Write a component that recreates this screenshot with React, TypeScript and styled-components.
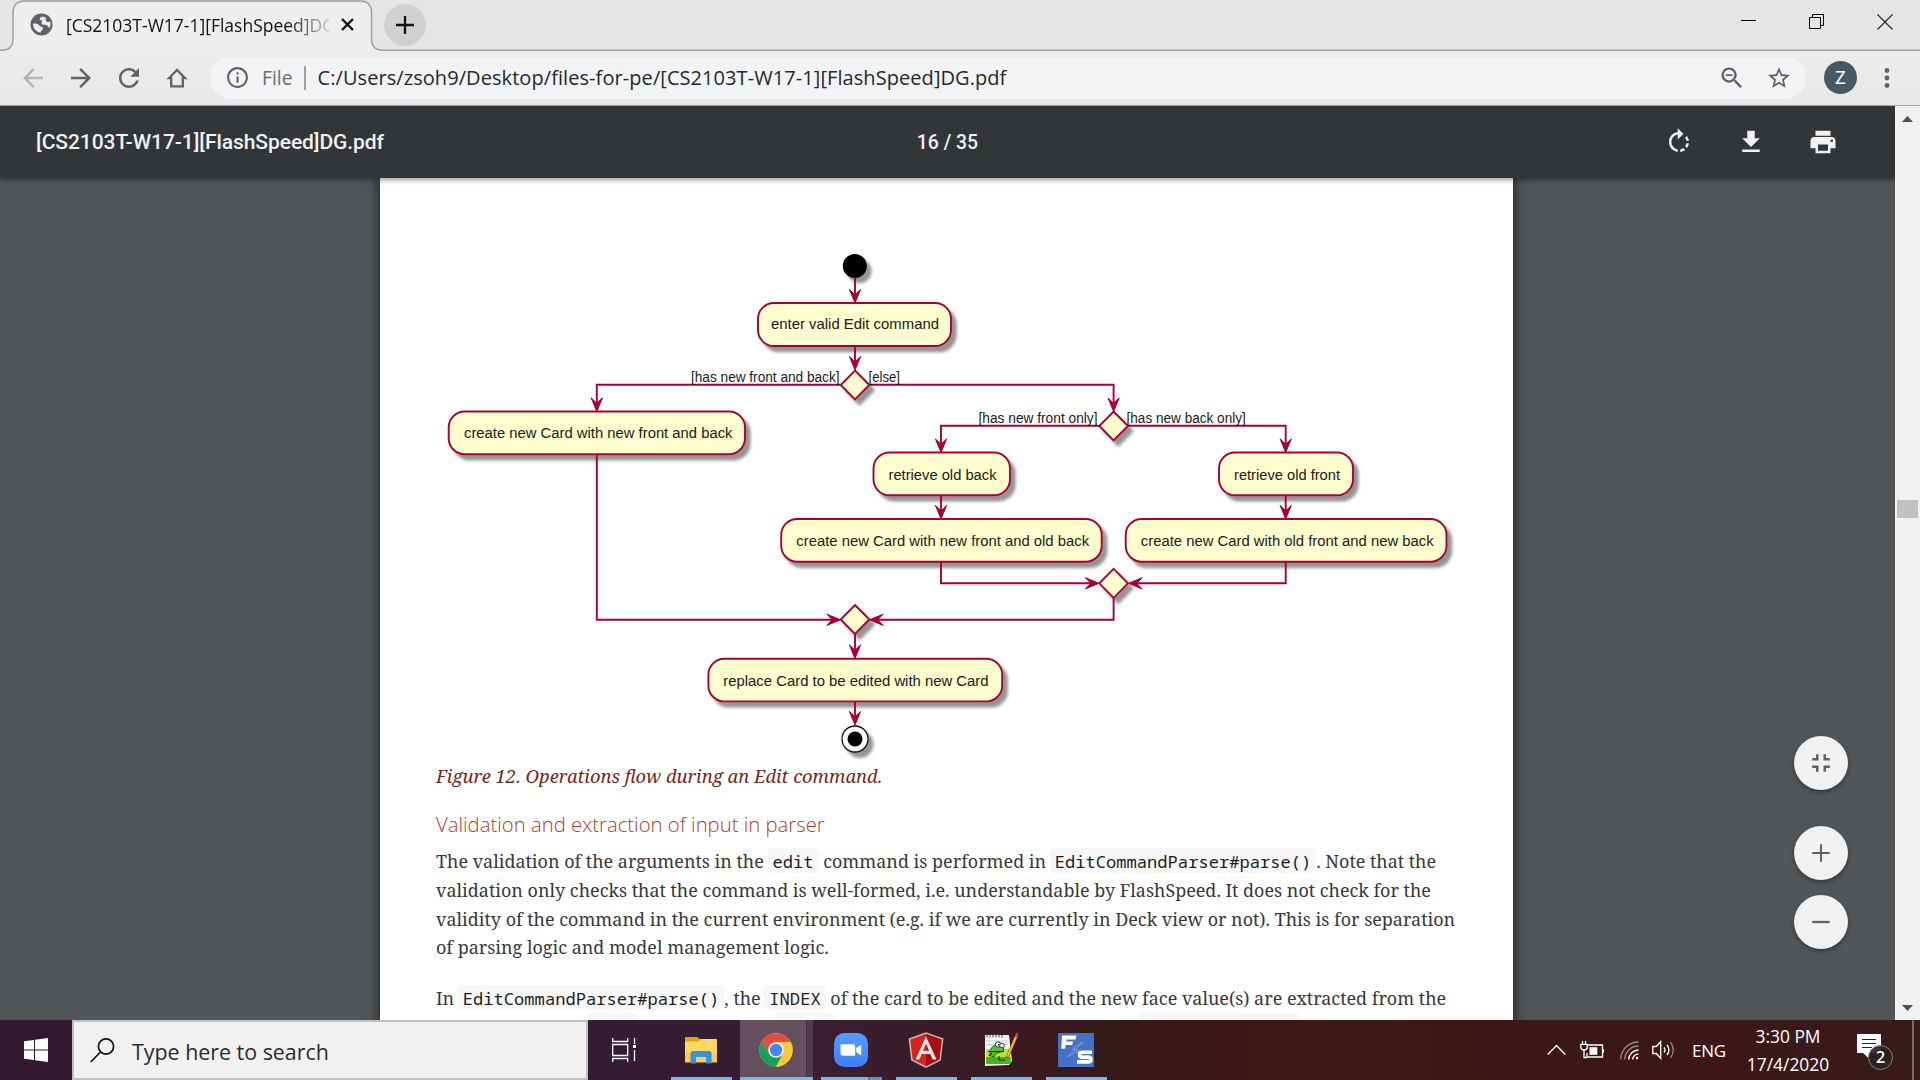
import React from "react";
import styled, { createGlobalStyle } from "styled-components";

const ui = `"Open Sans", "Noto Sans", sans-serif`;
const serif = `"Noto Serif", "DejaVu Serif Condensed", "DejaVu Serif", serif`;
const mono = `"Noto Sans Mono", "DejaVu Sans Mono", monospace`;
const crimson = "#a80036";

const GlobalStyle = createGlobalStyle`
  *, *::before, *::after { box-sizing: border-box; }
  body { margin: 0; overflow: hidden; }
  svg { display: block; flex: none; }
`;

const Screen = styled.div`
  width: 1920px;
  height: 1080px;
  display: flex;
  flex-direction: column;
  overflow: hidden;
  font-family: ${ui};
`;

/* ---------- browser chrome ---------- */

const TabStrip = styled.div`
  position: relative;
  height: 51px;
  flex: none;
  display: flex;
  background: #e5e5e5;
`;

const TabOutline = styled.svg`
  position: absolute;
  left: 0;
  top: 0;
`;

const Tab = styled.div`
  position: relative;
  width: 372px;
  padding: 0 17px 2px 30px;
  display: flex;
  align-items: center;
`;

const TabTitle = styled.div`
  flex: none;
  width: 263px;
  margin: 0 12px 0 13px;
  overflow: hidden;
  white-space: nowrap;
  font-size: 17.5px;
  color: #111;
  mask-image: linear-gradient(to right, #000 84%, transparent 103%);
`;

const NewTab = styled.div`
  position: relative;
  width: 42px;
  height: 42px;
  margin: 4px 0 0 12px;
  border-radius: 50%;
  background: #d0d0d0;
  display: grid;
  place-items: center;
`;

const WindowButtons = styled.div`
  position: relative;
  margin-left: auto;
  height: 43px;
  padding-right: 27px;
  display: flex;
  align-items: center;
  gap: 52px;
`;

const AddressRow = styled.div`
  height: 55px;
  flex: none;
  padding: 0 23px 1px 18px;
  display: flex;
  align-items: center;
  gap: 18px;
  background: linear-gradient(#ececec, #e8e8e8);
  border-bottom: 1px solid #a5a5a5;
`;

const AddressBar = styled.div`
  flex: none;
  width: 1596px;
  height: 42px;
  padding: 0 14px 0 15px;
  border-radius: 21px;
  background: #f1f3f4;
  display: flex;
  align-items: center;
`;

const Scheme = styled.span`
  margin-left: 12px;
  padding-right: 11px;
  font-size: 19.3px;
  line-height: 24px;
  color: #6b6e72;
  border-right: 2px solid #9da0a4;
`;

const Url = styled.span`
  margin-left: 12px;
  padding-top: 1px;
  flex: 1;
  font-size: 20px;
  line-height: 24px;
  letter-spacing: 0.07px;
  color: #25282c;
`;

const StarSlot = styled.span`
  margin-left: 20px;
`;

const Avatar = styled.div`
  width: 33px;
  height: 33px;
  border-radius: 50%;
  background: #455a64;
  color: #fff;
  font: 18px Roboto, sans-serif;
  display: grid;
  place-items: center;
`;

const MenuSlot = styled.div`
  margin-left: auto;
  width: 20px;
  display: grid;
  place-items: center;
`;

/* ---------- pdf viewer ---------- */

const Viewer = styled.div`
  height: 914px;
  flex: none;
  display: flex;
  background: #525659;
`;

const ViewerMain = styled.div`
  position: relative;
  width: 1895px;
  height: 914px;
  overflow: hidden;
  display: flex;
  flex-direction: column;
`;

const PdfBar = styled.div`
  position: relative;
  z-index: 1;
  height: 72px;
  flex: none;
  padding: 0 57px 0 36px;
  display: grid;
  grid-template-columns: 1fr auto 1fr;
  align-items: center;
  background: #323639;
  color: #f1f1f1;
  font-family: Roboto, sans-serif;
  font-weight: 500;
  box-shadow: 0 2px 5px rgba(0, 0, 0, 0.4);
`;

const PdfTitle = styled.div`
  font-size: 21px;
  letter-spacing: -0.07px;
`;

const PageCount = styled.div`
  font-size: 19.4px;
  padding-left: 21px;
`;

const PdfActions = styled.div`
  display: flex;
  justify-content: flex-end;
  gap: 42px;
`;

const Page = styled.div`
  width: 1133px;
  flex: none;
  margin-left: 380px;
  height: 1000px;
  background: #fff;
  box-shadow: 0 0 10px 2px rgba(0, 0, 0, 0.55);
`;

const Prose = styled.div`
  padding-left: 56px;
  font-family: ${serif};
  font-size: 17.95px;
  color: #36383a;
  white-space: nowrap;
`;

const Caption = styled.div`
  line-height: 28px;
  font-style: italic;
  font-size: 18.35px;
  color: #7a2518;
`;

const Heading = styled.div`
  margin: 20px 0 9px;
  line-height: 28px;
  font-family: "Open Sans", sans-serif;
  font-weight: 300;
  font-size: 20.3px;
  color: #ba3925;
`;

const Paragraph = styled.div`
  margin-bottom: 22px;
`;

const Line = styled.div`
  height: 28.8px;
  line-height: 28.8px;
`;

const Code = styled.code`
  margin-left: -1px;
  padding: 2px 5px 0;
  border-radius: 4px;
  background: #f7f7f8;
  color: #1c1c1e;
  font-family: ${mono};
  font-size: 17.1px;
  line-height: 1;
`;

const ChipRow = styled.div`
  display: flex;
  padding-left: 151px;
`;

const EmptyChip = styled.span<{ $width: number; $after: number }>`
  width: ${(p) => p.$width}px;
  height: 25px;
  margin-right: ${(p) => p.$after}px;
  border-radius: 4px;
  background: #f7f7f8;
`;

const ZoomControls = styled.div`
  position: absolute;
  left: 1794px;
  top: 630px;
  display: flex;
  flex-direction: column;
`;

const RoundButton = styled.div<{ $gap: number }>`
  width: 54px;
  height: 54px;
  margin-bottom: ${(p) => p.$gap}px;
  border-radius: 50%;
  background: #f1f1f1;
  display: grid;
  place-items: center;
  box-shadow: 0 2px 4px rgba(0, 0, 0, 0.4);
`;

const Scrollbar = styled.div`
  width: 25px;
  padding: 10px 0 9px;
  background: #f1f1f1;
  display: flex;
  flex-direction: column;
  align-items: center;
`;

const Thumb = styled.div`
  width: 21px;
  height: 18px;
  margin: 378px 0 auto;
  background: #c1c1c1;
`;

/* ---------- taskbar ---------- */

const Taskbar = styled.div`
  height: 60px;
  flex: none;
  display: flex;
  color: #fff;
  background: linear-gradient(to right, #33192f 0, #351c35 620px, #391e30 830px, #3a1a22 1010px, #36191a 1110px, #3e1816 1300px, #3c1718 1700px, #371b1a 1920px);
`;

const StartButton = styled.div`
  width: 72px;
  display: grid;
  place-items: center;
`;

const SearchBox = styled.div`
  width: 516px;
  border: 2px solid #c1c1c1;
  background: #f1f1f1;
  padding: 0 0 0 16px;
  display: flex;
  align-items: center;
  gap: 17px;
  color: #2b2b2b;
  font-size: 21.4px;
`;

const SearchHint = styled.span`
  padding-top: 2px;
`;

const TaskViewButton = styled.div`
  width: 76px;
  padding-right: 4px;
  display: grid;
  place-items: center;
`;

const AppTile = styled.div<{ $active?: boolean }>`
  width: 75px;
  padding-top: 3px;
  display: flex;
  flex-direction: column;
  align-items: center;
  justify-content: space-between;
  background: ${(p) =>
    p.$active ? "linear-gradient(to right, transparent 1px, #64505f 1px, #64505f 67px, #44303f 67px, #44303f 68px, #513d4c 68px, #513d4c 74px, transparent 74px)" : "none"};
`;

const TileIcon = styled.div`
  flex: 1;
  padding-right: 2px;
  display: grid;
  place-items: center;
`;

const Underline = styled.div<{ $wide?: boolean; $stacked?: boolean }>`
  width: ${(p) => (p.$wide ? 73 : 61)}px;
  height: 3px;
  background: ${(p) =>
    p.$stacked ? "linear-gradient(to right, #76b9ed 47px, #517b9c 47px, #517b9c 49px, #6496bd 49px)" : "#76b9ed"};
`;

const Tray = styled.div`
  margin-left: auto;
  display: flex;
  align-items: center;
`;

const TraySlot = styled.div<{ $left: number }>`
  margin-left: ${(p) => p.$left}px;
`;

const Language = styled.div`
  width: 36px;
  margin-left: 17px;
  font-size: 17px;
  letter-spacing: -0.3px;
`;

const Clock = styled.div`
  width: 84px;
  margin-left: 18px;
  text-align: center;
  font-size: 17.4px;
  line-height: 28px;
`;

const Notifications = styled.div`
  position: relative;
  width: 36px;
  height: 38px;
  margin: 6px 0 0 27px;
`;

const Badge = styled.div`
  position: absolute;
  left: 11px;
  top: 11px;
  width: 25px;
  height: 25px;
  border-radius: 50%;
  border: 1.5px solid #8b8080;
  background: rgba(42, 34, 34, 0.93);
  font-size: 16px;
  font-weight: 600;
  line-height: 22px;
  text-align: center;
`;

const ShowDesktop = styled.div`
  width: 8px;
  height: 60px;
  margin-left: 19px;
  border-left: 2px solid #7d6767;
`;

/* ---------- icons ---------- */

const Icon = ({ d, size, fill }: { d: string; size: number; fill: string }) => (
  <svg width={size} height={size} viewBox="0 0 24 24" fill={fill}>
    <path d={d} />
  </svg>
);

const paths = {
  back: "M20 11H7.83l5.59-5.59L12 4l-8 8 8 8 1.41-1.41L7.83 13H20v-2z",
  forward: "M12 4l-1.41 1.41L16.17 11H4v2h12.17l-5.58 5.59L12 20l8-8z",
  reload:
    "M17.65 6.35C16.2 4.9 14.21 4 12 4c-4.42 0-7.99 3.58-7.99 8s3.57 8 7.99 8c3.73 0 6.84-2.55 7.73-6h-2.08c-.82 2.33-3.04 4-5.65 4-3.31 0-6-2.69-6-6s2.69-6 6-6c1.66 0 3.14.69 4.22 1.78L13 11h7V4l-2.35 2.35z",
  info: "M11 17h2v-6h-2v6zm1-15C6.48 2 2 6.48 2 12s4.48 10 10 10 10-4.48 10-10S17.52 2 12 2zm0 18c-4.41 0-8-3.59-8-8s3.59-8 8-8 8 3.59 8 8-3.59 8-8 8zM11 9h2V7h-2v2z",
  zoomOut:
    "M15.5 14h-.79l-.28-.27C15.41 12.59 16 11.11 16 9.5 16 5.91 13.09 3 9.5 3S3 5.91 3 9.5 5.91 16 9.5 16c1.61 0 3.09-.59 4.23-1.57l.27.28v.79l5 4.99L20.49 19l-4.99-5zm-6 0C7.01 14 5 11.99 5 9.5S7.01 5 9.5 5 14 7.01 14 9.5 11.99 14 9.5 14zM6.6 8.8h5.8v1.4H6.6z",
  star: "M22 9.24l-7.19-.62L12 2 9.19 8.63 2 9.24l5.46 4.73L5.82 21 12 17.27 18.18 21l-1.63-7.03L22 9.24zM12 15.4l-3.76 2.27 1-4.28-3.32-2.88 4.38-.38L12 6.1l1.71 4.04 4.38.38-3.32 2.88 1 4.28L12 15.4z",
  rotate:
    "M15.55 5.55L11 1v3.07C7.06 4.56 4 7.92 4 12s3.05 7.44 7 7.93v-2.02c-2.84-.48-5-2.94-5-5.91s2.16-5.43 5-5.91V10l4.55-4.45zM19.93 11c-.17-1.39-.72-2.73-1.62-3.89l-1.42 1.42c.54.75.88 1.6 1.02 2.47h2.02zM13 17.9v2.02c1.39-.17 2.74-.71 3.9-1.61l-1.44-1.44c-.75.54-1.59.89-2.46 1.03zm3.89-2.42l1.42 1.41c.9-1.16 1.45-2.5 1.62-3.89h-2.02c-.14.87-.48 1.72-1.02 2.48z",
  download: "M19 9h-4V3H9v6H5l7 7 7-7zM5 18v2h14v-2H5z",
  print:
    "M19 8H5c-1.66 0-3 1.34-3 3v6h4v4h12v-4h4v-6c0-1.66-1.34-3-3-3zm-3 11H8v-5h8v5zm3-7c-.55 0-1-.45-1-1s.45-1 1-1 1 .45 1 1-.45 1-1 1zm-1-9H6v4h12V3z",
  fit: "M5 16h3v3h2v-5H5v2zm3-8H5v2h5V5H8v3zm6 11h2v-3h3v-2h-5v5zm2-11V5h-2v5h5V8h-3z",
  plus: "M19 12.8h-6.2V19h-1.6v-6.2H5v-1.6h6.2V5h1.6v6.2H19z",
  minus: "M5 11.1h14v1.8H5z",
};

const Globe = () => (
  <svg width="23" height="23" viewBox="0 0 23 23">
    <circle cx="11.5" cy="11.5" r="11" fill="#5f6368" />
    <path d="M13 3.4c-2.6.5-3.7 1.5-3.2 3.2l2.7 1.1-1.2 2.2 1 1.6 4.4.5 2.6 3c1.2-1.9 1.6-4.3.9-6.4l-2.7.6-2.3-2.4 1.1-1.9z" fill="#efefef" />
    <path d="M3 10.5c2.6.1 5 .1 6.1 1.7 1.3 1.9 3.4.9 3.8 2.8.3 1.8-1.8 2-2.1 4.6-4.6-.3-7.8-4.3-7.8-9.1z" fill="#efefef" />
  </svg>
);

const HomeIcon = () => (
  <svg width="30" height="30" viewBox="-15 -15 30 30">
    <path d="M-8 .2L0-8 8 .2H5.8V8.3H-5.8V.2Z" fill="none" stroke="#5f6368" strokeWidth="2.3" />
  </svg>
);

const ExplorerIcon = () => (
  <svg width="34" height="28" viewBox="0 0 34 28">
    <path d="M1 1h12l3 2h0v5H1z" fill="#e0a010" />
    <path d="M1 5.5h13l2.500-2.5H32a1 1 0 0 1 1 1v22H1z" fill="#ffd766" />
    <path d="M1 17h32v9.5H1z" fill="#fbcb4f" />
    <path d="M6.5 27.5V17.5a2.5 2.5 0 0 1 2.5-2.5h16a2.5 2.5 0 0 1 2.5 2.5v10h-5.5v-6.5H12v6.5z" fill="#3592dc" />
  </svg>
);

const ChromeIcon = () => (
  <svg width="34" height="34" viewBox="-17 -17 34 34">
    <circle r="16.7" fill="#fdc83c" />
    <path d="M-14.5-8.3A16.7 16.7 0 0 1 14.5-8H0L-7 4z" fill="#dd4f43" />
    <path d="M-14.5-8.3A16.7 16.7 0 0 0 0 16.7L7 4H-7z" fill="#179f5c" />
    <path d="M14.6-8A16.7 16.7 0 0 1 0 16.7L6.9 4 2-8z" fill="#fdc83c" />
    <circle r="7.8" fill="#f4f4f4" />
    <circle r="6.2" fill="#4688f1" />
  </svg>
);

const ZoomIcon = () => (
  <svg width="34" height="34" viewBox="0 0 34 34">
    <defs>
      <linearGradient id="zoomBlue" x2="0" y2="1">
        <stop offset="0" stopColor="#559dff" />
        <stop offset="1" stopColor="#3c80f8" />
      </linearGradient>
    </defs>
    <rect width="34" height="34" rx="10.5" fill="url(#zoomBlue)" />
    <path d="M6.5 11.2h12.3a2.4 2.4 0 0 1 2.4 2.4v9.2H9a2.5 2.5 0 0 1-2.5-2.5z" fill="#fff" />
    <path d="M22.2 15.1l5-3.4v10.8l-5-3.4z" fill="#fff" />
  </svg>
);

const AngularIcon = () => (
  <svg width="38" height="38" viewBox="0 0 38 38">
    <path d="M19 1.2L36.500 7.4 33.8 29.5 19 37 4.2 29.5 1.5 7.4z" fill="#b9b9b9" />
    <path d="M19 2.9L34.7 8.5 32.3 28.4 19 35.2 5.7 28.4 3.3 8.5z" fill="#df1f1a" />
    <path d="M19 2.9L34.7 8.5 32.3 28.4 19 35.2z" fill="#a90f12" />
    <path d="M19 5.5L8.5 28.5h3.9l2.3-5.6h8.6l2.3 5.6h3.9zm0 6.9l3.1 7.3h-6.2z" fill="#ececec" />
  </svg>
);

const NotepadIcon = () => (
  <svg width="36" height="36" viewBox="0 0 36 36">
    <path d="M2 3h24l3 26-3 4L2 34z" fill="#f4f6f4" />
    <path d="M3 9h22M3 12.5h22" stroke="#b9cdd8" strokeWidth="1" />
    <path d="M3 17h23l2 13-2 2H3z" fill="#b8e236" />
    <path d="M3 25h24.5l.5 5-2 2H3z" fill="#46b51e" />
    <path d="M4 2v3.500M7 2v3.500M10 2v3.500M13 2v3.500M16 2v3.500M19 2v3.500" stroke="#555" strokeWidth="1.1" />
    <path d="M8 17c1-4 8-5 12-2l1 3c-3 2-4 3-8 3l-2 4-3-1c-2-2-1-5 0-7z" fill="#58c22b" stroke="#2b5d1d" strokeWidth="1" />
    <circle cx="15" cy="12.5" r="2.7" fill="#fff" stroke="#333" strokeWidth="1" />
    <circle cx="19" cy="13.5" r="2.3" fill="#fff" stroke="#333" strokeWidth="1" />
    <circle cx="15.6" cy="12.7" r=".8" />
    <path d="M5 19.5h16M16 24v4h6M9 21l-3 3" stroke="#25341c" strokeWidth="1.2" fill="none" />
    <path d="M33.5 3.5L24 26" stroke="#7a4c10" strokeWidth="3.2" />
    <path d="M33.2 4.5L24.4 25" stroke="#f3b52a" strokeWidth="2.1" />
    <path d="M34.5 1L33 5" stroke="#b64a4a" strokeWidth="2.4" />
  </svg>
);

const FlashSpeedIcon = () => (
  <svg width="36" height="34" viewBox="0 0 36 34">
    <rect width="36" height="34" fill="#4472c4" />
    <path d="M9 24l8-7-1-3 9-5-7 7 1 3zM14 16l8 2" stroke="#86a5da" strokeWidth=".8" fill="none" />
    <path d="M4 2.500H18.500L17.500 6.500H8.500L8.200 8.500H15L14.200 12H7.800L7 15.800H3.300z" fill="#fff" />
    <path d="M34 19.300H24.500q-3 0-3 2.400t3 2.400h5.500q3 0 3 2.400t-3 2.400H19" stroke="#fff" strokeWidth="3.600" fill="none" />
  </svg>
);

/* ---------- activity diagram ---------- */

const Diagram = styled.svg`
  font-family: "Liberation Sans", Arial, sans-serif;
`;

type BoxProps = { x: number; y: number; w: number; h: number; tx: number; tw: number; base: number; label: string };

const boxes: BoxProps[] = [
  { x: 758, y: 303, w: 193, h: 43, tx: 771, tw: 168, base: 329.2, label: "enter valid Edit command" },
  { x: 448.7, y: 411.5, w: 296.3, h: 42.7, tx: 464, tw: 268.5, base: 438.3, label: "create new Card with new front and back" },
  { x: 873.5, y: 452.5, w: 136.5, h: 42.8, tx: 888.5, tw: 108, base: 479.5, label: "retrieve old back" },
  { x: 1219, y: 452.5, w: 134, h: 42.8, tx: 1234, tw: 106, base: 479.5, label: "retrieve old front" },
  { x: 781.2, y: 519, w: 320.5, h: 42.7, tx: 796.3, tw: 292.8, base: 546.2, label: "create new Card with new front and old back" },
  { x: 1125.7, y: 519, w: 320.8, h: 42.7, tx: 1140.8, tw: 292.8, base: 546.2, label: "create new Card with old front and new back" },
  { x: 708.4, y: 658.7, w: 293.8, h: 42.7, tx: 723.3, tw: 265.3, base: 685.8, label: "replace Card to be edited with new Card" },
];

const ActionBox = ({ x, y, w, h, tx, tw, base, label }: BoxProps) => (
  <g>
    <rect x={x} y={y} width={w} height={h} rx="16" fill="#fefece" stroke={crimson} strokeWidth="1.9" filter="url(#drop)" />
    <text x={tx} y={base} fontSize="15.3" textLength={tw} lengthAdjust="spacingAndGlyphs" fill="#1a1a18">
      {label}
    </text>
  </g>
);

const Diamond = ({ x, y }: { x: number; y: number }) => (
  <path d={`M${x} ${y - 14.5}l14.3 14.5-14.3 14.5-14.3-14.5z`} fill="#fefece" stroke={crimson} strokeWidth="1.9" filter="url(#drop)" />
);

const Arrow = ({ x, y, turn = 0 }: { x: number; y: number; turn?: number }) => (
  <path d="M0 0L-5.6-13.6 0-8.2 5.6-13.6Z" transform={`translate(${x} ${y}) rotate(${turn})`} fill={crimson} stroke={crimson} strokeWidth="1" />
);

const guards = [
  { x: 691, y: 381.5, w: 148.5, label: "[has new front and back]" },
  { x: 868.5, y: 381.5, w: 31.5, label: "[else]" },
  { x: 978.5, y: 423, w: 119, label: "[has new front only]" },
  { x: 1126.5, y: 423, w: 119.3, label: "[has new back only]" },
];

const ActivityDiagram = () => (
  <Diagram width="1133" height="584" viewBox="380 178 1133 584">
    <defs>
      <filter id="drop" x="-20%" y="-30%" width="150%" height="180%">
        <feDropShadow dx="4.7" dy="5.2" stdDeviation="1.8" floodColor="#000" floodOpacity=".42" />
      </filter>
    </defs>
    <circle cx="854.8" cy="266" r="12" filter="url(#drop)" />
    {boxes.map((b) => (
      <ActionBox key={b.label} {...b} />
    ))}
    <Diamond x={855} y={385} />
    <Diamond x={1113.6} y={426} />
    <Diamond x={1113.6} y={583.3} />
    <Diamond x={855} y={619.5} />
    <g fill="none" stroke={crimson} strokeWidth="1.9">
      <path d="M855 278V298M855 347V366M840.5 384.700H596.8V405M869.5 384.700H1113.6V405" />
      <path d="M1099 425.800H941V446M1128 425.800H1285.7V446M941 496V512M1285.7 496V512" />
      <path d="M941 562V583.3H1092M1285.7 562V583.3H1136M1113.6 598V619.8H877M596.8 455V619.8H834" />
      <path d="M855 634V652M855 702V718" />
    </g>
    <Arrow x={855} y={303} />
    <Arrow x={855} y={370} />
    <Arrow x={596.8} y={411.5} />
    <Arrow x={1113.6} y={411.5} />
    <Arrow x={941} y={452.5} />
    <Arrow x={1285.7} y={452.5} />
    <Arrow x={941} y={519} />
    <Arrow x={1285.7} y={519} />
    <Arrow x={855} y={658.5} />
    <Arrow x={855} y={725} />
    <Arrow x={1099} y={583.3} turn={-90} />
    <Arrow x={1128.5} y={583.3} turn={90} />
    <Arrow x={840.5} y={619.8} turn={-90} />
    <Arrow x={869.5} y={619.8} turn={90} />
    <circle cx="855" cy="739" r="13" fill="#fff" stroke="#111" strokeWidth="1.3" filter="url(#drop)" />
    <circle cx="855" cy="739" r="7.5" />
    {guards.map((g) => (
      <text key={g.label} x={g.x} y={g.y} fontSize="14" textLength={g.w} lengthAdjust="spacingAndGlyphs" fill="#1a1a18">
        {g.label}
      </text>
    ))}
  </Diagram>
);

/* ---------- page ---------- */

export default function App() {
  return (
    <Screen>
      <GlobalStyle />
      <TabStrip>
        <TabOutline width="1920" height="51" viewBox="0 0 1920 51">
          <path
            d="M-2 50.3H2Q13 50.3 13 39V13Q13 1 25 1H360Q371.5 1 371.5 13V39Q371.5 50.3 384 50.3H1922V53H-2Z"
            fill="#eeeeee"
            stroke="#a0a0a0"
            strokeWidth="1.5"
          />
        </TabOutline>
        <Tab>
          <Globe />
          <TabTitle>[CS2103T-W17-1][FlashSpeed]DG.pdf</TabTitle>
          <svg width="13" height="13" viewBox="0 0 13 13">
            <path d="M1 1l11 11M12 1L1 12" stroke="#111" strokeWidth="2.4" />
          </svg>
        </Tab>
        <NewTab>
          <svg width="18" height="18" viewBox="0 0 18 18">
            <path d="M9 0v18M0 9h18" stroke="#111" strokeWidth="2.3" />
          </svg>
        </NewTab>
        <WindowButtons>
          <svg width="16" height="16" viewBox="0 0 16 16">
            <path d="M0 6.5h15" stroke="#000" />
          </svg>
          <svg width="16" height="16" viewBox="0 0 16 16" fill="none" stroke="#000">
            <path d="M.5 3.500h11v11H.5zM3.500 3V.5h11v11H12" />
          </svg>
          <svg width="16" height="16" viewBox="0 0 16 16">
            <path d="M.5.5l15 15M15.5.5l-15 15" stroke="#222" strokeWidth="1.1" />
          </svg>
        </WindowButtons>
      </TabStrip>

      <AddressRow>
        <Icon d={paths.back} size={30} fill="#b4b5b7" />
        <Icon d={paths.forward} size={30} fill="#5f6368" />
        <Icon d={paths.reload} size={30} fill="#5f6368" />
        <HomeIcon />
        <AddressBar>
          <Icon d={paths.info} size={25} fill="#5f6368" />
          <Scheme>File</Scheme>
          <Url>C:/Users/zsoh9/Desktop/files-for-pe/[CS2103T-W17-1][FlashSpeed]DG.pdf</Url>
          <Icon d={paths.zoomOut} size={28} fill="#5f6368" />
          <StarSlot>
            <Icon d={paths.star} size={26} fill="#5f6368" />
          </StarSlot>
        </AddressBar>
        <Avatar>Z</Avatar>
        <MenuSlot>
          <svg width="6" height="22" viewBox="0 0 6 22" fill="#5f6368">
            <circle cx="3" cy="3.5" r="2.4" />
            <circle cx="3" cy="11" r="2.4" />
            <circle cx="3" cy="18.5" r="2.4" />
          </svg>
        </MenuSlot>
      </AddressRow>

      <Viewer>
        <ViewerMain>
          <PdfBar>
            <PdfTitle>[CS2103T-W17-1][FlashSpeed]DG.pdf</PdfTitle>
            <PageCount>16 / 35</PageCount>
            <PdfActions>
              <Icon d={paths.rotate} size={30} fill="#f1f1f1" />
              <Icon d={paths.download} size={30} fill="#f1f1f1" />
              <Icon d={paths.print} size={30} fill="#f1f1f1" />
            </PdfActions>
          </PdfBar>
          <Page>
            <ActivityDiagram />
            <Prose>
              <Caption>Figure 12. Operations flow during an Edit command.</Caption>
              <Heading>Validation and extraction of input in parser</Heading>
              <Paragraph>
                <Line>
                  The validation of the arguments in the <Code>edit</Code> command is performed in{" "}
                  <Code>EditCommandParser#parse()</Code>. Note that the
                </Line>
                <Line>
                  validation only checks that the command is well-formed, i.e. understandable by FlashSpeed. It does not
                  check for the
                </Line>
                <Line>
                  validity of the command in the current environment (e.g. if we are currently in Deck view or not).
                  This is for separation
                </Line>
                <Line>of parsing logic and model management logic.</Line>
              </Paragraph>
              <Line>
                In <Code>EditCommandParser#parse()</Code>, the <Code>INDEX</Code> of the card to be edited and the new
                face value(s) are extracted from the
              </Line>
              <ChipRow>
                <EmptyChip $width={50} $after={138} />
                <EmptyChip $width={59} $after={304} />
                <EmptyChip $width={162} $after={0} />
              </ChipRow>
            </Prose>
          </Page>
          <ZoomControls>
            <RoundButton $gap={36}>
              <Icon d={paths.fit} size={30} fill="#616161" />
            </RoundButton>
            <RoundButton $gap={15}>
              <Icon d={paths.plus} size={30} fill="#616161" />
            </RoundButton>
            <RoundButton $gap={0}>
              <Icon d={paths.minus} size={30} fill="#616161" />
            </RoundButton>
          </ZoomControls>
        </ViewerMain>
        <Scrollbar>
          <svg width="11" height="6" viewBox="0 0 11 6">
            <path d="M0 6L5.5 0 11 6z" fill="#505050" />
          </svg>
          <Thumb />
          <svg width="11" height="6" viewBox="0 0 11 6">
            <path d="M0 0L5.5 6 11 0z" fill="#505050" />
          </svg>
        </Scrollbar>
      </Viewer>

      <Taskbar>
        <StartButton>
          <svg width="24" height="24" viewBox="0 0 24 24" fill="#fff">
            <path d="M0 3.3L10 1.9V11.4H0zM11 1.7L24 0V11.4H11zM0 12.4H10V22L0 20.700zM11 12.4H24V24L11 22.2z" />
          </svg>
        </StartButton>
        <SearchBox>
          <svg width="25" height="25" viewBox="0 0 25 25" fill="none" stroke="#111" strokeWidth="1.7">
            <circle cx="16" cy="8.5" r="7.6" />
            <path d="M10.5 14L.8 24" />
          </svg>
          <SearchHint>Type here to search</SearchHint>
        </SearchBox>
        <TaskViewButton>
          <svg width="25" height="24" viewBox="0 0 25 24" fill="none" stroke="#fff" strokeWidth="1.3">
            <path d="M.7 0v3.500h15V0M.7 6.500h15v11H.7zM.7 24v-3.500h15V24M22.500 0v6M22.500 12v11" />
            <path d="M21 7h3v3h-3z" fill="#fff" stroke="none" />
          </svg>
        </TaskViewButton>
        <AppTile>
          <TileIcon>
            <ExplorerIcon />
          </TileIcon>
          <Underline />
        </AppTile>
        <AppTile $active>
          <TileIcon>
            <ChromeIcon />
          </TileIcon>
          <Underline $wide />
        </AppTile>
        <AppTile>
          <TileIcon>
            <ZoomIcon />
          </TileIcon>
          <Underline $stacked />
        </AppTile>
        <AppTile>
          <TileIcon>
            <AngularIcon />
          </TileIcon>
          <Underline />
        </AppTile>
        <AppTile>
          <TileIcon>
            <NotepadIcon />
          </TileIcon>
          <Underline />
        </AppTile>
        <AppTile>
          <TileIcon>
            <FlashSpeedIcon />
          </TileIcon>
          <Underline />
        </AppTile>

        <Tray>
          <TraySlot $left={0}>
            <svg width="19" height="12" viewBox="0 0 19 12" fill="none" stroke="#fff" strokeWidth="1.4">
              <path d="M.7 10.5L9.5 1.500l8.800 9" />
            </svg>
          </TraySlot>
          <TraySlot $left={14}>
            <svg width="25" height="18" viewBox="0 0 25 18" fill="none" stroke="#fff" strokeWidth="1.3">
              <path d="M8 4h14.500v12H7V12M23.300 8v4M2.500 0v3M5.500 0v3M.8 3.300h6.500V6q0 3-3.200 3T.8 6zM4 9v7.500h3" />
              <path d="M9.5 6.200h7.800v7.600H9.500z" fill="#fff" stroke="none" />
            </svg>
          </TraySlot>
          <TraySlot $left={15}>
            <svg width="19" height="19" viewBox="0 0 19 19" fill="none" stroke="#fff" strokeWidth="1.4">
              <path d="M.7 18.500A17.800 17.800 0 0 1 18.500 1M4.700 18.500A13.800 13.800 0 0 1 18.500 5" stroke="#9b8787" />
              <path d="M8.700 18.500A9.800 9.800 0 0 1 18.500 9M12.700 18.500A5.800 5.800 0 0 1 18.500 13" />
              <circle cx="17" cy="17" r="1.3" fill="#fff" stroke="none" />
            </svg>
          </TraySlot>
          <TraySlot $left={13}>
            <svg width="23" height="20" viewBox="0 0 23 20" fill="none" stroke="#fff" strokeWidth="1.3">
              <path d="M.8 6.500h3.500L8.700 1.500v17L4.300 13.500H.8zM12 7.500q1.800 2.500 0 5M15 5q3.800 5 0 10" />
              <path d="M18.500 2q5.500 8 0 16" stroke="#9b8787" />
            </svg>
          </TraySlot>
          <Language>ENG</Language>
          <Clock>
            3:30 PM
            <br />
            17/4/2020
          </Clock>
          <Notifications>
            <svg width="24" height="25" viewBox="0 0 24 25">
              <path d="M0 0h24v19H13l-1.500 5L6 19H0z" fill="#fff" />
              <path d="M5 5.500h14M5 9.500h14M5 13.500h10" stroke="#3c1718" strokeWidth="1.2" />
            </svg>
            <Badge>2</Badge>
          </Notifications>
          <ShowDesktop />
        </Tray>
      </Taskbar>
    </Screen>
  );
}
